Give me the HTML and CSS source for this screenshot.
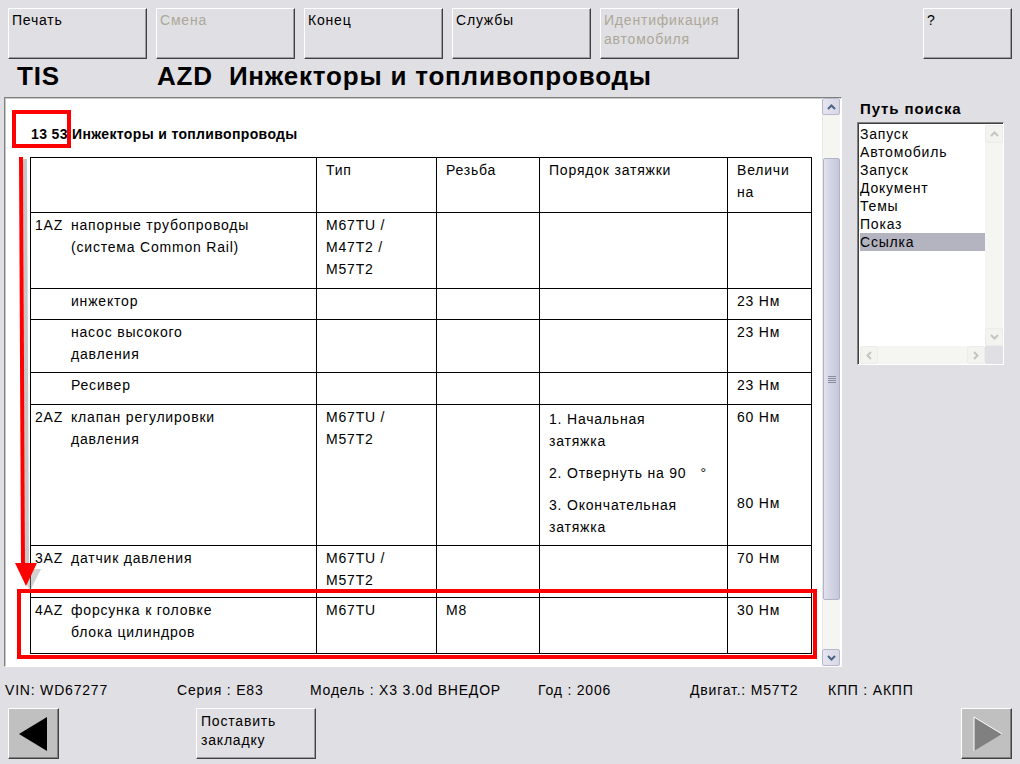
FILE: index.html
```html
<!DOCTYPE html>
<html lang="ru">
<head>
<meta charset="utf-8">
<title>TIS</title>
<link rel="stylesheet" href="styles.css">
</head>
<body>
<div class="screen">
  <div class="toolbar">
    <button class="btn">Печать</button>
    <button class="btn disabled">Смена</button>
    <button class="btn">Конец</button>
    <button class="btn">Службы</button>
    <button class="btn disabled">Идентификация<br>автомобиля</button>
    <button class="btn help">?</button>
  </div>

  <div class="titlebar">
    <span class="app">TIS</span>
    <span class="doc">AZD&nbsp; Инжекторы и топливопроводы</span>
  </div>

  <div class="main">
    <div class="panel">
      <div class="content">
        <h2 class="heading">13 53 Инжекторы и топливопроводы</h2>
        <table class="spec">
          <colgroup>
            <col class="c1"><col class="c2"><col class="c3"><col class="c4"><col class="c5">
          </colgroup>
          <tr class="r-head">
            <td></td>
            <td>Тип</td>
            <td>Резьба</td>
            <td>Порядок затяжки</td>
            <td>Величи<br>на</td>
          </tr>
          <tr class="r1">
            <td><div class="item"><span class="code">1AZ</span><span>напорные трубопроводы<br>(система Common Rail)</span></div></td>
            <td>M67TU /<br>M47T2 /<br>M57T2</td>
            <td></td><td></td><td></td>
          </tr>
          <tr class="r2">
            <td><div class="item"><span class="code"></span><span>инжектор</span></div></td>
            <td></td><td></td><td></td><td>23 Нм</td>
          </tr>
          <tr class="r3">
            <td><div class="item"><span class="code"></span><span>насос высокого<br>давления</span></div></td>
            <td></td><td></td><td></td><td>23 Нм</td>
          </tr>
          <tr class="r4">
            <td><div class="item"><span class="code"></span><span>Ресивер</span></div></td>
            <td></td><td></td><td></td><td>23 Нм</td>
          </tr>
          <tr class="r5">
            <td><div class="item"><span class="code">2AZ</span><span>клапан регулировки<br>давления</span></div></td>
            <td>M67TU /<br>M57T2</td>
            <td></td>
            <td class="steps">
              <p>1. Начальная<br>затяжка</p>
              <p>2. Отвернуть на 90 &nbsp;&nbsp;°</p>
              <p>3. Окончательная<br>затяжка</p>
            </td>
            <td class="steps">
              <p>60 Нм</p>
              <p class="gap">80 Нм</p>
            </td>
          </tr>
          <tr class="r6">
            <td><div class="item"><span class="code">3AZ</span><span>датчик давления</span></div></td>
            <td>M67TU /<br>M57T2</td>
            <td></td><td></td><td>70 Нм</td>
          </tr>
          <tr class="r7">
            <td><div class="item"><span class="code">4AZ</span><span>форсунка к головке<br>блока цилиндров</span></div></td>
            <td>M67TU</td>
            <td>M8</td>
            <td></td>
            <td>30 Нм</td>
          </tr>
        </table>

        <div class="mark mark-code"></div>
        <div class="mark mark-row"></div>
        <svg class="arrow" width="34" height="440" viewBox="0 0 34 440">
          <line x1="10" y1="2" x2="12" y2="410" stroke="#9a9a9a" stroke-width="4" opacity="0.55"/>
          <polygon points="4,412 26,412 15,434" fill="#9a9a9a" opacity="0.45"/>
          <line x1="6" y1="0" x2="8" y2="408" stroke="#ff0000" stroke-width="4"/>
          <polygon points="0,406 22,406 11,429" fill="#ff0000"/>
        </svg>
      </div>
      <div class="vscroll">
        <div class="sbtn">
          <svg width="9" height="6" viewBox="0 0 9 6"><polyline points="1,5 4.5,1.5 8,5" fill="none" stroke="#4d6185" stroke-width="2"/></svg>
        </div>
        <div class="track">
          <div class="thumb"><span class="grip"></span></div>
        </div>
        <div class="sbtn">
          <svg width="9" height="6" viewBox="0 0 9 6"><polyline points="1,1 4.5,4.5 8,1" fill="none" stroke="#4d6185" stroke-width="2"/></svg>
        </div>
      </div>
    </div>

    <aside class="side">
      <div class="side-title">Путь поиска</div>
      <div class="listbox">
        <div class="list-area">
          <ul class="items">
            <li>Запуск</li>
            <li>Автомобиль</li>
            <li>Запуск</li>
            <li>Документ</li>
            <li>Темы</li>
            <li>Показ</li>
            <li class="sel">Ссылка</li>
          </ul>
          <div class="lvscroll">
            <div class="lbtn"><svg width="9" height="6" viewBox="0 0 9 6"><polyline points="1,5 4.5,1.5 8,5" fill="none" stroke="#c4c4c0" stroke-width="2"/></svg></div>
            <div class="ltrack"></div>
            <div class="lbtn"><svg width="9" height="6" viewBox="0 0 9 6"><polyline points="1,1 4.5,4.5 8,1" fill="none" stroke="#c4c4c0" stroke-width="2"/></svg></div>
          </div>
        </div>
        <div class="lhscroll">
          <div class="lbtn"><svg width="6" height="9" viewBox="0 0 6 9"><polyline points="5,1 1.5,4.5 5,8" fill="none" stroke="#c4c4c0" stroke-width="2"/></svg></div>
          <div class="ltrack"></div>
          <div class="lbtn"><svg width="6" height="9" viewBox="0 0 6 9"><polyline points="1,1 4.5,4.5 1,8" fill="none" stroke="#c4c4c0" stroke-width="2"/></svg></div>
          <div class="corner"></div>
        </div>
      </div>
    </aside>
  </div>

  <div class="status">
    <span class="s-vin">VIN: WD67277</span>
    <span class="s-ser">Серия : E83</span>
    <span class="s-mod">Модель : X3 3.0d ВНЕДОР</span>
    <span class="s-god">Год : 2006</span>
    <span class="s-eng">Двигат.: M57T2</span>
    <span class="s-kpp">КПП : АКПП</span>
  </div>

  <div class="bottom">
    <button class="navbtn">
      <svg width="34" height="36" viewBox="0 0 34 36"><polygon points="30,1 30,35 2,18" fill="#000"/></svg>
    </button>
    <button class="btn bookmark">Поставить<br>закладку</button>
    <button class="navbtn next">
      <svg width="34" height="36" viewBox="0 0 34 36"><polygon points="4,1 4,35 32,18" fill="#808080"/><polyline points="4,35 4,1 32,18" fill="none" stroke="#ffffff" stroke-width="1"/></svg>
    </button>
  </div>
</div>
</body>
</html>
```

FILE: styles.css
```css
* { box-sizing: border-box; }

html, body {
  margin: 0;
  padding: 0;
  background: #e0dfe3;
}

body {
  font-family: "Liberation Sans", Arial, sans-serif;
  font-size: 14px;
  letter-spacing: 0.8px;
  color: #000;
}

.screen {
  width: 1020px;
  height: 764px;
  overflow: hidden;
}

/* ---------- buttons ---------- */
.btn {
  font: inherit;
  letter-spacing: inherit;
  width: 139px;
  height: 51px;
  padding: 2px 3px;
  text-align: left;
  vertical-align: top;
  background: #e0dfe3;
  border: 1px solid;
  border-color: #ffffff #404040 #404040 #ffffff;
  box-shadow: inset -1px -1px 0 #9d9da1;
  color: #000;
  line-height: 19px;
  display: flex;
  align-items: flex-start;
}

.btn.disabled { color: #aca899; }

.toolbar {
  display: flex;
  gap: 9px;
  padding: 8px 8px 0 8px;
  height: 59px;
}

.toolbar .help {
  width: 89px;
  margin-left: auto;
}

/* ---------- title ---------- */
.titlebar {
  height: 38px;
  display: flex;
  align-items: center;
  padding-left: 17px;
  font-weight: bold;
  font-size: 26px;
  letter-spacing: 0.8px;
  padding-bottom: 4px;
}

.titlebar .app { width: 140px; }

/* ---------- main area ---------- */
.main {
  display: flex;
  height: 570px;
  padding-left: 4px;
}

.panel {
  width: 838px;
  height: 570px;
  display: flex;
  border: 1px solid;
  border-color: #808080 #ffffff #ffffff #808080;
  box-shadow: inset 1px 1px 0 #c8c8c8;
  background: #fff;
}

.content {
  position: relative;
  flex: 1;
  padding: 0 0 0 25px;
  overflow: hidden;
}

.heading {
  margin: 0;
  padding: 28px 0 0 1px;
  height: 59px;
  font-size: 14px;
  font-weight: bold;
  letter-spacing: 0.35px;
  line-height: 17px;
}

.spec {
  border-collapse: collapse;
  table-layout: fixed;
  width: 781px;
}

.spec col.c1 { width: 286px; }
.spec col.c2 { width: 120px; }
.spec col.c3 { width: 103px; }
.spec col.c4 { width: 188px; }
.spec col.c5 { width: 84px; }

.spec td {
  border: 1px solid #000;
  vertical-align: top;
  padding: 1px 9px 0 9px;
  line-height: 22px;
  white-space: nowrap;
}

.spec td:first-child { padding-left: 4px; }

.item { display: flex; }
.item .code { width: 36px; flex: none; }

.r-head { height: 55px; }
.r1 { height: 76px; }
.r2 { height: 31px; }
.r3 { height: 53px; }
.r4 { height: 32px; }
.r5 { height: 141px; }
.r6 { height: 52px; }
.r7 { height: 56px; }

.steps p { margin: 0 0 10px 0; }
.steps p:last-child { margin-bottom: 0; }
.r5 td.steps:nth-child(4) { padding-top: 3px; }
.steps p.gap { margin-top: 64px; }

/* annotation overlays */
.mark {
  position: absolute;
  border: 4px solid #ff0000;
}

.mark-code {
  left: 7px;
  top: 12px;
  width: 59px;
  height: 38px;
}

.mark-row {
  left: 12px;
  top: 491px;
  width: 800px;
  height: 70px;
}

.arrow {
  position: absolute;
  left: 10px;
  top: 59px;
}

/* main scrollbar */
.vscroll {
  width: 18px;
  display: flex;
  flex-direction: column;
  background: #f4f4f0;
  margin-right: 1px;
}

.sbtn {
  height: 17px;
  background: linear-gradient(to right, #e6e6f0, #d8d8e6);
  border: 1px solid #b8b8cc;
  border-radius: 2px;
  display: flex;
  align-items: center;
  justify-content: center;
}

.track {
  flex: 1;
  padding: 43px 0 49px 0;
  background: #f5f5f1;
  border-left: 1px solid #e8e8e4;
}

.thumb {
  height: 100%;
  border: 1px solid #b0b4c8;
  border-radius: 2px;
  background: linear-gradient(to right, #e2e2ee, #cfd0e0 60%, #c6c7da);
  display: flex;
  align-items: center;
  justify-content: center;
}

.grip {
  width: 8px;
  height: 7px;
  background: repeating-linear-gradient(to bottom, #8c8ca0 0 1px, transparent 1px 2px);
}

/* ---------- side panel ---------- */
.side {
  margin-left: 15px;
  padding-top: 3px;
}

.side-title {
  font-weight: bold;
  font-size: 15px;
  letter-spacing: 0.9px;
  line-height: 18px;
  padding-left: 3px;
  height: 22px;
}

.listbox {
  width: 147px;
  height: 243px;
  border: 1px solid;
  border-color: #808080 #ffffff #ffffff #808080;
  box-shadow: inset 1px 1px 0 #404040;
  background: #fff;
  padding: 2px 0 0 2px;
  display: flex;
  flex-direction: column;
}

.list-area {
  flex: 1;
  display: flex;
}

.items {
  list-style: none;
  margin: 0;
  padding: 0;
  flex: 1;
}

.items li {
  height: 18px;
  line-height: 18px;
  font-size: 14px;
  padding-left: 0;
}

.items li.sel { background: #b4b4c0; }

.lvscroll {
  width: 18px;
  display: flex;
  flex-direction: column;
  background: #f5f5f1;
}

.lbtn {
  width: 18px;
  height: 18px;
  border: 1px solid #ececea;
  background: #f3f3ef;
  border-radius: 2px;
  display: flex;
  align-items: center;
  justify-content: center;
}

.ltrack { flex: 1; background: #f5f5f1; }

.lhscroll {
  height: 18px;
  display: flex;
}

.corner {
  width: 18px;
  height: 18px;
  background: #e0dfe3;
}

/* ---------- status ---------- */
.status {
  height: 41px;
  display: flex;
  align-items: center;
  padding-top: 4px;
}

.status span { white-space: nowrap; }
.s-vin { margin-left: 5px; width: 172px; }
.s-ser { width: 133px; }
.s-mod { width: 228px; }
.s-god { width: 152px; }
.s-eng { width: 138px; }

/* ---------- bottom ---------- */
.bottom {
  display: flex;
  align-items: flex-start;
  padding: 0 8px 0 8px;
}

.navbtn {
  width: 51px;
  height: 51px;
  padding: 0;
  background: #c0c0c0;
  border: 1px solid;
  border-color: #ffffff #404040 #404040 #ffffff;
  box-shadow: inset -1px -1px 0 #808080;
  display: flex;
  align-items: center;
  justify-content: center;
}

.bottom .bookmark {
  width: 120px;
  margin-left: 137px;
  padding-left: 4px;
  padding-top: 3px;
}

.navbtn.next { margin-left: auto; }
```
